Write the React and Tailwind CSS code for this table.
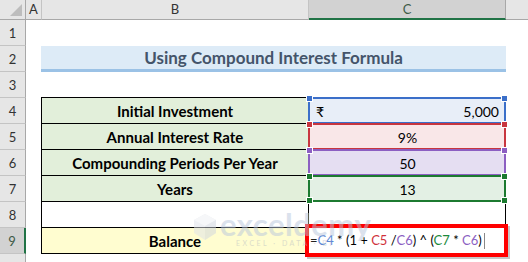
import React from "react";

const F = "font-['Lato','Open_Sans',sans-serif]";

function RowHead({ n, sel }) {
  if (sel) {
    return (
      <div className="w-[26px] h-[26px] shrink-0 bg-[#d2d2d2] border-b border-[#c4c4c4] border-r-2 border-r-[#217346] flex items-center justify-center text-[13px] text-[#3d5a47] pt-[3px]">
        {n}
      </div>
    );
  }
  return (
    <div className="w-[26px] h-[26px] shrink-0 bg-[#e6e6e6] border-b border-[#c4c4c4] border-r border-r-[#a8a8a8] flex items-center justify-center text-[13px] text-[#333] pt-[3px]">
      {n}
    </div>
  );
}

function Hl({ color, handleBottom }) {
  return (
    <div
      className="absolute -left-[1px] -top-[1px] right-0 bottom-0 border-2 pointer-events-none z-10"
      style={{ borderColor: color }}
    >
      <div className="absolute -left-[4px] -top-[4px] w-[7px] h-[7px] border border-white" style={{ background: color }} />
      <div className="absolute -right-[4px] -top-[4px] w-[7px] h-[7px] border border-white" style={{ background: color }} />
      {handleBottom && (
        <>
          <div className="absolute -left-[4px] -bottom-[4px] w-[7px] h-[7px] border border-white" style={{ background: color }} />
          <div className="absolute -right-[4px] -bottom-[4px] w-[7px] h-[7px] border border-white" style={{ background: color }} />
        </>
      )}
    </div>
  );
}

function DataRow({ n, label, bg, cbg, color, value, currency, last }) {
  return (
    <div className="flex h-[26px]">
      <RowHead n={n} />
      <div className="w-[15px] shrink-0" />
      <div className={`w-[268px] shrink-0 h-[26px] border-l border-r border-b border-black ${bg} flex items-center justify-center font-bold text-[15px] text-black pt-[1px]`}>
        {label}
      </div>
      <div className={`relative w-[197px] shrink-0 h-[26px] ${cbg} flex items-center text-[14px] text-black pt-[1px]`}>
        {currency ? (
          <div className="flex w-full justify-between pl-[7px] pr-[7px]">
            <span>₹</span>
            <span>{value}</span>
          </div>
        ) : (
          <div className="w-full text-center">{value}</div>
        )}
        <Hl color={color} handleBottom={last} />
      </div>
      <div className="flex-1" />
    </div>
  );
}

export default function App() {
  return (
    <div className={`relative w-[528px] h-[262px] overflow-hidden bg-white ${F}`}>
      {/* column headers */}
      <div className="flex h-[20px]">
        <div className="w-[26px] shrink-0 h-[20px] bg-[#e6e6e6] border-r border-b border-[#a8a8a8] flex items-end justify-end pr-[3px] pb-[3px]">
          <svg width="12" height="12" viewBox="0 0 12 12">
            <polygon points="12,0 12,12 0,12" fill="#bdbdbd" />
          </svg>
        </div>
        <div className="w-[16px] shrink-0 h-[20px] bg-[#e6e6e6] border-r border-r-[#c4c4c4] border-b border-b-[#a8a8a8] flex items-center justify-center text-[13px] text-[#333]">
          A
        </div>
        <div className="w-[267px] shrink-0 h-[20px] bg-[#e6e6e6] border-r border-r-[#c4c4c4] border-b border-b-[#a8a8a8] flex items-center justify-center text-[13px] text-[#333]">
          B
        </div>
        <div className="w-[197px] shrink-0 h-[20px] bg-[#d2d2d2] border-r border-r-[#a8a8a8] border-b-2 border-b-[#217346] flex items-center justify-center text-[13px] text-[#3d5a47] pt-[1px]">
          C
        </div>
        <div className="flex-1 h-[20px] bg-[#e6e6e6] border-b border-b-[#a8a8a8]" />
      </div>

      {/* row 1 */}
      <div className="flex h-[26px]">
        <RowHead n={1} />
      </div>

      {/* row 2 title */}
      <div className="flex h-[26px]">
        <RowHead n={2} />
        <div className="w-[15px] shrink-0" />
        <div className="w-[465px] shrink-0 h-[26px] bg-[#ddebf7] border-b-[3px] border-[#9bc2e6] flex items-center justify-center font-bold text-[17px] text-[#44546a] pt-[1px]">
          Using Compound Interest Formula
        </div>
      </div>

      {/* row 3 */}
      <div className="flex h-[26px]">
        <RowHead n={3} />
        <div className="w-[15px] shrink-0" />
        <div className="w-[268px] shrink-0 h-[26px] border-b border-black" />
      </div>

      <DataRow n={4} label="Initial Investment" bg="bg-[#e2efda]" cbg="bg-[#e8eef8]" color="#3b6fc9" value="5,000" currency />
      <DataRow n={5} label="Annual Interest Rate" bg="bg-[#e2efda]" cbg="bg-[#f9e7e8]" color="#c8363f" value="9%" />
      <DataRow n={6} label="Compounding Periods Per Year" bg="bg-[#e2efda]" cbg="bg-[#e5def2]" color="#8c5fc2" value="50" />
      <DataRow n={7} label="Years" bg="bg-[#e2efda]" cbg="bg-[#e3f0e4]" color="#1c7a30" value="13" last />

      {/* row 8 */}
      <div className="flex h-[26px]">
        <RowHead n={8} />
        <div className="w-[15px] shrink-0" />
        <div className="w-[268px] shrink-0 h-[26px] border-l border-r border-b border-black bg-white" />
        <div className="w-[197px] shrink-0 h-[26px] border-r border-b border-black bg-white" />
      </div>

      {/* row 9 */}
      <div className="flex h-[26px]">
        <RowHead n={9} sel />
        <div className="w-[15px] shrink-0" />
        <div className="w-[268px] shrink-0 h-[26px] border-l border-r border-b border-black bg-[#fffdd0] flex items-center justify-center font-bold text-[15px] text-black pt-[1px]">
          Balance
        </div>
        <div className="w-[197px] shrink-0 h-[26px] border-r border-b border-black bg-white" />
      </div>

      {/* row 10 */}
      <div className="flex h-[26px]">
        <div className="w-[26px] h-[26px] shrink-0 bg-[#e6e6e6] border-r border-r-[#a8a8a8]" />
      </div>

      {/* editing formula with red annotation */}
      <div className="absolute left-[305px] top-[224px] w-[203px] h-[33px] border-[4px] border-[#ff0000] bg-white shadow-[2px_2px_0_#c8c8c8] flex items-center pl-[1px] text-[13px] text-black z-20 pt-[1px]">
        <span className="whitespace-pre">
          <span className="text-[#222]">=</span>
          <span className="text-[#5b86d4]">C4</span>
          {" * (1 + "}
          <span className="text-[#d0313b]">C5</span>
          {" /"}
          <span className="text-[#8c5fc2]">C6</span>
          {") ^ ("}
          <span className="text-[#1c8a3c]">C7</span>
          {" * "}
          <span className="text-[#8c5fc2]">C6</span>
          {")"}
        </span>
        <span className="inline-block w-[1px] h-[16px] bg-[#888] ml-[2px]" />
      </div>

      {/* watermark */}
      <div className="absolute left-[193px] top-[213px] flex items-start opacity-50 pointer-events-none z-30">
        <svg width="24" height="28" viewBox="0 0 24 28">
          <polygon points="12,1 23,7 23,20 12,27 1,20 1,7" fill="#dfe3ea" />
          <polygon points="12,1 23,7 12,13 1,7" fill="#eef0f4" />
          <polygon points="12,13 23,7 23,20 12,27" fill="#cfd5df" />
        </svg>
        <div className="flex flex-col ml-[3px] -mt-[6px]">
          <span className="text-[31px] leading-[34px] font-bold text-[#b9c6dc] tracking-[0.5px]">exceldemy</span>
          <span className="text-[7px] leading-[8px] text-[#b8bcc4] tracking-[2.5px] ml-[16px] -mt-[2px]">EXCEL · DATA · BI</span>
        </div>
      </div>
    </div>
  );
}
